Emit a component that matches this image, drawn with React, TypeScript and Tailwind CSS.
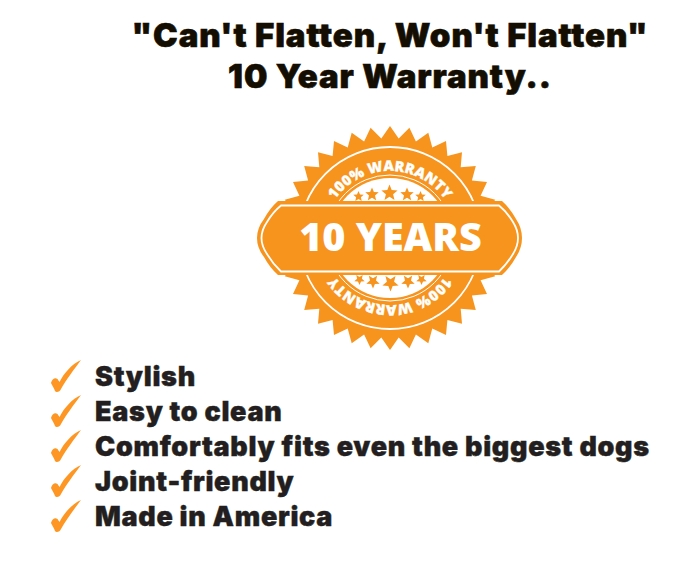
import React from 'react';

const items = [
  'Stylish',
  'Easy to clean',
  'Comfortably fits even the biggest dogs',
  'Joint-friendly',
  'Made in America',
];

const CX = 390;
const CY = 238;

// 36 tooth seal outline
const sealPoints = Array.from({ length: 72 }, (_, i) => {
  const r = i % 2 === 0 ? 112 : 100;
  const a = (i * 5 * Math.PI) / 180 - Math.PI / 2;
  return `${(CX + r * Math.cos(a)).toFixed(1)},${(CY + r * Math.sin(a)).toFixed(1)}`;
}).join(' ');

const Star = ({ x, y, r }: { x: number; y: number; r: number }) => {
  const pts = Array.from({ length: 10 }, (_, i) => {
    const rad = i % 2 === 0 ? r : r * 0.45;
    const a = (i * 36 * Math.PI) / 180 - Math.PI / 2;
    return `${(x + rad * Math.cos(a)).toFixed(1)},${(y + rad * Math.sin(a)).toFixed(1)}`;
  }).join(' ');
  return <polygon points={pts} fill="#f7941e" />;
};

const BadgeHalf = () => (
  <g>
    <Star x={389.5} y={193} r={8.5} />
    <Star x={372} y={194.5} r={7} />
    <Star x={407} y={194.5} r={7} />
    <Star x={358.5} y={196.5} r={5.5} />
    <Star x={420.5} y={196.5} r={5.5} />
    <text
      fontFamily="'Open Sans', sans-serif"
      fontWeight={800}
      fontSize={14.5}
      fill="#fff"
      stroke="#fff"
      strokeWidth={0.3}
      textAnchor="middle"
    >
      <textPath href="#warranty-arc" startOffset="50%">
        100% WARRANTY
      </textPath>
    </text>
  </g>
);

const Badge = () => (
  <svg width={695} height={240} viewBox="0 120 695 240" className="block">
    <defs>
      <path id="warranty-arc" d={`M ${CX - 67} ${CY} A 67 67 0 0 1 ${CX + 67} ${CY}`} />
    </defs>
    <polygon points={sealPoints} fill="#f7941e" />
    <circle cx={CX} cy={CY} r={91} fill="none" stroke="#fff" strokeWidth={1.8} />
    <circle cx={CX} cy={CY} r={63} fill="none" stroke="#fff" strokeWidth={1} />
    <circle cx={CX} cy={CY} r={60} fill="#fff" />
    <BadgeHalf />
    <g transform={`rotate(180 ${CX} ${CY})`}>
      <BadgeHalf />
    </g>
    <path
      d="M278 201 H502 Q510 208 516 219 Q522 228 522 238 Q522 248 516 257 Q510 268 502 275 H278 Q270 268 264 257 Q257 248 257 238 Q257 228 264 219 Q270 208 278 201 Z"
      fill="#f7941e"
    />
    <path
      d="M281 205.5 H499 Q507 212 513 222 Q518 230 518 238 Q518 246 513 254 Q507 264 499 271.5 H281 Q273 264 267 254 Q261.5 246 261.5 238 Q261.5 230 267 222 Q273 212 281 205.5 Z"
      fill="none"
      stroke="#fff"
      strokeWidth={1.8}
    />
    <text
      x={390.5}
      y={251}
      textAnchor="middle"
      fontFamily="'Open Sans', sans-serif"
      fontWeight={800}
      fontSize={39.5}
      fill="#fff"
    >
      10 YEARS
    </text>
  </svg>
);

const Check = () => (
  <svg width={32} height={34} viewBox="0 0 32 34" className="shrink-0 mb-[4px]">
    <path
      d="M1 24C2 20 5 18 7.5 20L9.5 23C14 14 22 5 31 1C25 9 16 21 11 30C10 33 6 34 5 32C4 29 2 26 1 24Z"
      fill="#fd9622"
    />
  </svg>
);

export default function App() {
  return (
    <div className="w-[695px] h-[565px] bg-white overflow-hidden font-['Inter',sans-serif]">
      <h1 className="pt-[15px] pl-[85px] text-center text-[33px] leading-[41px] font-black tracking-[0.9px] [-webkit-text-stroke:0.6px_#140e02] text-[#140e02]">
        "Can't Flatten, Won't Flatten"
        <br />
        10 Year Warranty..
      </h1>
      <div className="mt-[23px]">
        <Badge />
      </div>
      <ul className="pl-[50px] flex flex-col">
        {items.map((item) => (
          <li key={item} className="flex items-center h-[35px] gap-[13px]">
            <Check />
            <span className="text-[27px] font-black tracking-[0.7px] [-webkit-text-stroke:0.4px_#231f20] text-[#231f20] whitespace-nowrap">
              {item}
            </span>
          </li>
        ))}
      </ul>
    </div>
  );
}
